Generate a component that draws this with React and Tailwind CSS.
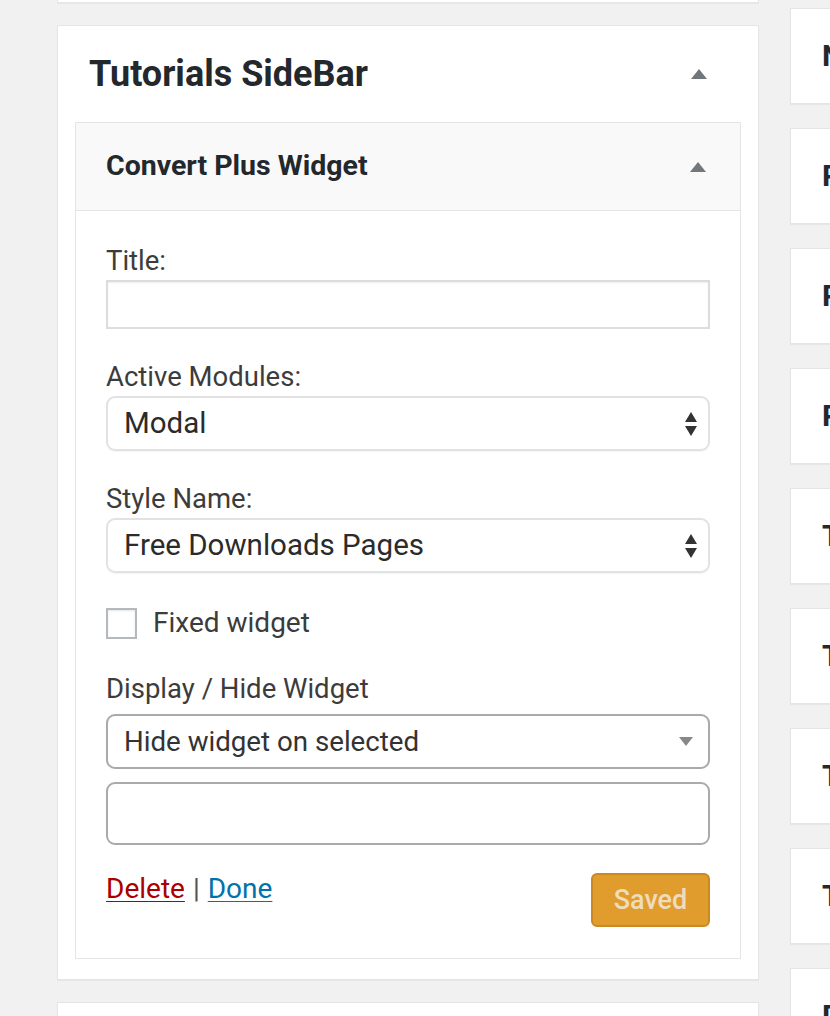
import React from "react";

function UpArrow() {
  return (
    <svg width="16" height="10" viewBox="0 0 16 10" className="block">
      <path d="M0 10 L8 0 L16 10 Z" fill="#72777c" />
    </svg>
  );
}

function UpDown() {
  return (
    <svg width="14" height="26" viewBox="0 0 14 26" className="block">
      <path d="M1 11 L7 1 L13 11 Z" fill="#333" />
      <path d="M1 15 L13 15 L7 25 Z" fill="#333" />
    </svg>
  );
}

function DownArrow() {
  return (
    <svg width="14" height="9" viewBox="0 0 14 9" className="block">
      <path d="M0 0 L14 0 L7 9 Z" fill="#888" />
    </svg>
  );
}

const font = { fontFamily: "Roboto, 'Noto Sans', sans-serif" };

function RightCard({ label }) {
  return (
    <div className="h-[96px] w-[200px] shrink-0 overflow-hidden bg-white border border-[#e5e5e5] shadow-[0_1px_1px_rgba(0,0,0,0.04)] flex items-center pl-[31px]">
      <span className="text-[30px] font-bold text-[#23282d] whitespace-nowrap leading-none">{label}</span>
    </div>
  );
}

export default function App() {
  const right = ["N", "P", "P", "P", "T", "T", "T", "T", "D"];
  return (
    <div
      className="w-[830px] h-[1016px] bg-[#f1f1f1] overflow-hidden flex items-start"
      style={font}
    >
      {/* Left column */}
      <div className="ml-[57px] w-[702px] shrink-0 flex flex-col">
        <div className="h-[3px] bg-white border-x border-b border-[#e5e5e5] shadow-[0_1px_1px_rgba(0,0,0,0.04)]" />
        <div className="mt-[22px] bg-white border border-[#e5e5e5] shadow-[0_1px_1px_rgba(0,0,0,0.04)] px-[17px] pb-[20px]">
          <div className="h-[96px] flex items-center justify-between pl-[14px] pr-[34px]">
            <h2 className="text-[36px] font-bold text-[#23282d] leading-none">Tutorials SideBar</h2>
            <UpArrow />
          </div>
          <div className="border border-[#e5e5e5] bg-white">
            <div className="h-[88px] bg-[#f9f9f9] border-b border-[#e5e5e5] flex items-center justify-between pl-[30px] pr-[34px]">
              <h3 className="text-[28.5px] font-bold text-[#23282d] leading-none">Convert Plus Widget</h3>
              <UpArrow />
            </div>
            <div className="px-[30px] pt-[34px] pb-[31px] flex flex-col text-[#3c3c3c]">
              <label className="text-[27.5px] leading-[32px]">Title:</label>
              <div className="mt-[3px] h-[49px] border-2 border-[#dddddd] shadow-[inset_0_1px_2px_rgba(0,0,0,0.07)]" />

              <label className="mt-[32px] text-[27.5px] leading-[32px]">Active Modules:</label>
              <div className="mt-[3px] h-[55px] border-2 border-[#e2e2e2] rounded-[9px] flex items-center justify-between pl-[16px] pr-[10px] shadow-[0_1px_1px_rgba(0,0,0,0.04)]">
                <span className="text-[29.5px] text-[#2b2b2b] leading-none">Modal</span>
                <UpDown />
              </div>

              <label className="mt-[32px] text-[27.5px] leading-[32px]">Style Name:</label>
              <div className="mt-[3px] h-[55px] border-2 border-[#e2e2e2] rounded-[9px] flex items-center justify-between pl-[16px] pr-[10px] shadow-[0_1px_1px_rgba(0,0,0,0.04)]">
                <span className="text-[29.5px] text-[#2b2b2b] leading-none">Free Downloads Pages</span>
                <UpDown />
              </div>

              <div className="mt-[34px] flex items-center">
                <div className="w-[31px] h-[31px] border-2 border-[#b4b9be] bg-white shadow-[inset_0_1px_2px_rgba(0,0,0,0.1)]" />
                <span className="ml-[16px] text-[28px] leading-[32px]">Fixed widget</span>
              </div>

              <label className="mt-[34px] text-[27.5px] leading-[32px]">Display / Hide Widget</label>
              <div className="mt-[9px] h-[55px] border-2 border-[#aaaaaa] rounded-[9px] flex items-center justify-between pl-[16px] pr-[15px]">
                <span className="text-[27.7px] text-[#333] leading-none">Hide widget on selected</span>
                <DownArrow />
              </div>
              <div className="mt-[13px] h-[63px] border-2 border-[#aaaaaa] rounded-[9px]" />

              <div className="mt-[28px] flex items-start justify-between">
                <div className="text-[28px] leading-[32px] flex items-center">
                  <a className="text-[#a00] underline decoration-1 underline-offset-[3px]">Delete</a>
                  <span className="mx-[8px] text-[#555]">|</span>
                  <a className="text-[#0073aa] underline decoration-1 underline-offset-[3px]">Done</a>
                </div>
                <button className="w-[119px] h-[54px] bg-[#e09c2d] border-2 border-[#c98a22] rounded-[6px] text-[27px] font-medium text-[#efdcbc] leading-none">
                  Saved
                </button>
              </div>
            </div>
          </div>
        </div>
        <div className="mt-[22px] h-[40px] bg-white border border-[#e5e5e5]" />
      </div>

      {/* Right column */}
      <div className="ml-[31px] pt-[8px] flex flex-col gap-[24px]">
        {right.map((r, i) => (
          <RightCard key={i} label={r} />
        ))}
      </div>
    </div>
  );
}
